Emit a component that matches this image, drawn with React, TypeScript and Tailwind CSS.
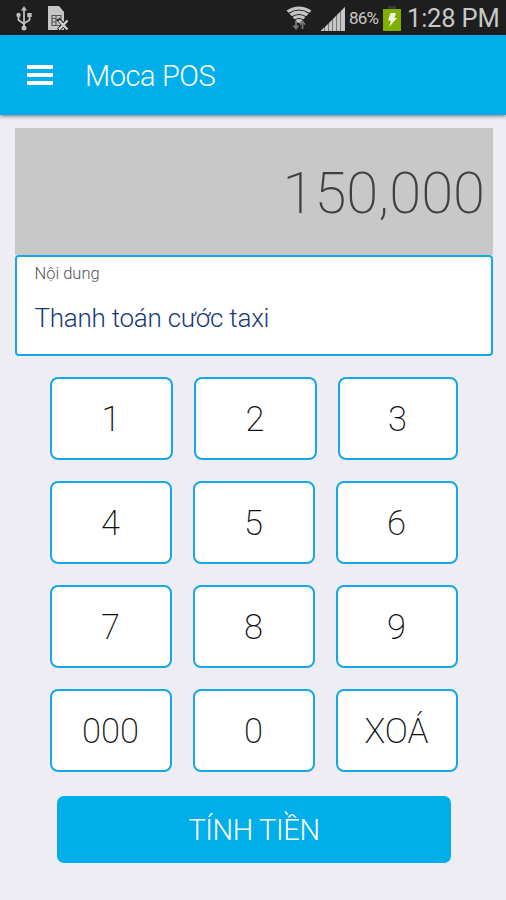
import React from "react";

type Key = { label: string; width: string };

const W1 = "w-[123px]";
const W2 = "w-[122px]";

const rows: Key[][] = [
  [{ label: "1", width: W1 }, { label: "2", width: W1 }, { label: "3", width: "w-[120px]" }],
  [{ label: "4", width: W2 }, { label: "5", width: W2 }, { label: "6", width: W2 }],
  [{ label: "7", width: W2 }, { label: "8", width: W2 }, { label: "9", width: W2 }],
  [{ label: "000", width: W2 }, { label: "0", width: W2 }, { label: "XOÁ", width: W2 }],
];

function UsbIcon() {
  return (
    <svg className="ml-[15px] h-[26px] w-[18px]" viewBox="0 0 18 26" fill="none" stroke="#bdbdbd" strokeWidth="1.8">
      <path d="M9 4v18M3.500 11v4L9 19M14.500 10.500V15L9 18.500" />
      <path d="M9 1l3 4.500H6z" fill="#bdbdbd" stroke="none" />
      <circle cx="9" cy="23" r="2.500" fill="#bdbdbd" stroke="none" />
      <circle cx="3.500" cy="10" r="2.200" fill="#bdbdbd" stroke="none" />
      <path d="M12.300 8h4.400v4h-4.400z" fill="#bdbdbd" stroke="none" />
    </svg>
  );
}

function SimIcon() {
  return (
    <svg className="ml-[14px] h-[26px] w-[22px]" viewBox="0 0 22 26" fill="none">
      <path d="M1 1h11l5 6v18H1z" fill="#c6c6c6" />
      <path d="M5 10.500h9v10H5zM5 13.500h4M5 17h4M9 10v11M9 15h5" stroke="#555" strokeWidth="1.200" />
      <path d="M11 14l10 11M21.500 14l-10 11" stroke="#1e1e1e" strokeWidth="4" />
      <path d="M12 15.500l8.500 9M20.500 15.500l-8.500 9" stroke="#d0d0d0" strokeWidth="2.400" />
    </svg>
  );
}

function WifiIcon() {
  return (
    <svg className="h-[26px] w-[26px]" viewBox="0 0 26 26" fill="none">
      <path d="M0.500 5.500Q13-2.500 25.500 5.500L14 18h-2z" fill="#c4c4c4" />
      <path d="M2.500 8.500Q13 1.500 23.500 8.500M5.500 12Q13 7 20.500 12M8.500 15Q13 12 17.500 15" stroke="#1e1e1e" strokeWidth="1.200" />
      <path d="M10 16v7M7.500 20.500l2.500 3 2.500-3M16.500 24v-7M14 19.500l2.500-3 2.500 3" stroke="#777" strokeWidth="1.800" />
    </svg>
  );
}

function SignalIcon() {
  return (
    <svg className="mt-[3px] ml-[9px] h-[24px] w-[24px]" viewBox="0 0 24 24" fill="#c6c6c6">
      <path d="M0 24L24 0v24z" fill="#777" />
      <path d="M0 24v-.5L3 20.500V24zM4 24v-4l3-3v7zM8 24v-8l3-3v11zM12 24V12l3-3v15zM16 24V8l3-3v19zM20 24V4l4-4v24z" />
    </svg>
  );
}

function BatteryIcon() {
  return (
    <svg className="mt-[1px] ml-[4px] h-[25px] w-[18px]" viewBox="0 0 18 25">
      <path d="M5 0h8v3H5z" fill="#383838" />
      <path d="M0 3h18v22H0z" fill="#7fb000" />
      <path d="M7.500 7H13l-1.500 5H14L6 21l2-6.500H5z" fill="#f4f8e8" />
    </svg>
  );
}

export default function App() {
  return (
    <div className="flex h-[900px] w-[506px] flex-col overflow-hidden bg-[#eeedf4] font-['Roboto',sans-serif] font-light">
      <div className="flex h-[35px] shrink-0 items-center bg-[#1e1e1e] text-[#c8c8c8]">
        <UsbIcon />
        <SimIcon />
        <div className="ml-auto flex items-center pr-[7px]">
          <WifiIcon />
          <SignalIcon />
          <span className="mt-[2px] ml-[4px] w-[30px] whitespace-nowrap text-[17px] leading-none font-normal tracking-[-0.8px]">86%</span>
          <BatteryIcon />
          <span className="mt-[2px] ml-[6px] w-[92px] whitespace-nowrap text-[25.500px] leading-none font-normal tracking-[-0.2px]">1:28 PM</span>
        </div>
      </div>

      <header className="flex h-[80px] shrink-0 items-center bg-[#00aeea] pl-[27px] text-white shadow-[0_1px_4px_rgba(0,0,0,0.55)]">
        <div className="flex w-[26px] flex-col gap-[4px]">
          <span className="h-[4px] bg-white" />
          <span className="h-[4px] bg-white" />
          <span className="h-[4px] bg-white" />
        </div>
        <h1 className="mt-[2px] ml-[32px] text-[29px] leading-none tracking-[-0.400px]">Moca POS</h1>
      </header>

      <main className="flex flex-col">
        <section className="mr-[13.500px] ml-[14.500px] mt-[13px]">
          <div className="flex h-[127px] items-center justify-end bg-[#c8c8c8] pt-[3px] pr-[7.500px] text-[58px] leading-none font-extralight text-[#404040]">
            150,000
          </div>
          <div className="flex h-[101px] flex-col rounded-[4px] border-2 border-[#16a8e5] bg-white pl-[18px]">
            <span className="mt-[7px] text-[16.500px] leading-[20px] text-[#555]">Nội dung</span>
            <span className="mt-[19px] text-[26px] leading-[30px] tracking-[-0.250px] text-[#173a78]">Thanh toán cước taxi</span>
          </div>
        </section>

        <section className="mt-[21px] ml-[50px] flex w-[408px] flex-col gap-[21px]">
          {rows.map((row) => (
            <div key={row[0].label} className="flex justify-between">
              {row.map((k) => (
                <button
                  key={k.label}
                  className={`flex h-[83px] items-center justify-center rounded-[8px] border-2 border-[#16a8e5] bg-white pt-[2px] pr-[1px] text-[34.500px] leading-none font-extralight text-[#111] ${k.width}`}
                >
                  {k.label}
                </button>
              ))}
            </div>
          ))}
        </section>

        <button className="mt-[24px] ml-[57px] flex h-[67px] w-[394px] items-center justify-center rounded-[7px] bg-[#00aeea] pt-[2px] text-[29px] leading-none tracking-[-0.4px] text-white">
          TÍNH TIỀN
        </button>
      </main>
    </div>
  );
}
